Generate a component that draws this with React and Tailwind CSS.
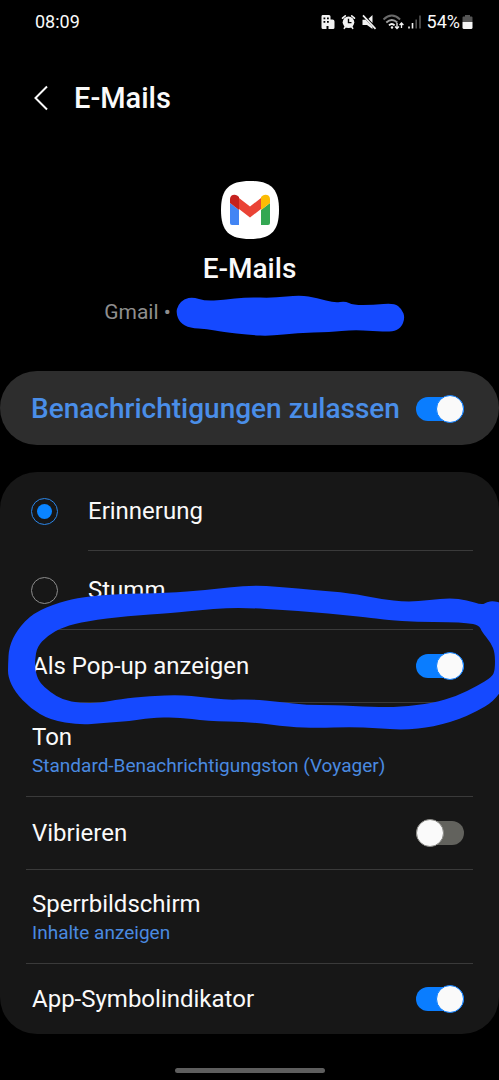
import { useState } from "react";

const loopOuter = [
  [8, 665], [9, 647], [17, 630], [33, 613], [60, 602], [83, 597], [117, 594], [167, 593], [207, 590], [250, 585],
  [283, 587], [313, 590], [350, 593], [380, 599], [407, 602], [430, 600], [450, 598], [467, 600], [482, 605],
  [487, 602], [493, 601], [503, 603], [512, 650], [503, 696], [467, 717], [433, 727], [403, 730], [377, 728],
  [350, 727], [317, 728], [290, 727], [250, 722], [207, 721], [177, 717], [150, 718], [130, 721], [103, 723],
  [80, 725], [50, 720], [30, 708], [15, 692], [8, 677],
];

const loopInner = [
  [35, 660], [37, 647], [47, 636], [63, 627], [87, 621], [127, 616], [173, 613], [200, 610], [227, 608], [250, 608],
  [283, 610], [313, 612], [343, 615], [373, 618], [387, 620], [417, 622], [450, 622], [467, 623], [479, 625],
  [482, 632], [491, 643], [495, 653], [495, 670], [492, 677], [477, 686], [457, 696], [433, 703], [400, 707],
  [373, 707], [333, 705], [307, 705], [280, 702], [250, 699], [227, 700], [203, 697], [180, 695], [150, 696],
  [120, 699], [100, 703], [80, 703], [63, 700], [50, 692], [39, 682], [35, 670],
];

const scribble = [
  [176, 313], [178, 305], [184, 299], [193, 297], [205, 301], [223, 300], [247, 297], [273, 298], [300, 295],
  [317, 298], [335, 303], [345, 301], [353, 305], [373, 305], [394, 303], [402, 309], [405, 318], [401, 328],
  [392, 332], [373, 331], [353, 330], [330, 332], [297, 333], [270, 336], [250, 335], [223, 332], [207, 329],
  [190, 328], [180, 323],
];

// closed curve through the midpoints of the given points
const smooth = (pts) => {
  const mid = (a, b) => `${(a[0] + b[0]) / 2} ${(a[1] + b[1]) / 2}`;
  const start = mid(pts[pts.length - 1], pts[0]);
  const curves = pts.map((p, i) => `Q${p[0]} ${p[1]} ${mid(p, pts[(i + 1) % pts.length])}`);
  return `M${start}${curves.join("")}Z`;
};

const StatusIcons = () => (
  <svg width="101" height="16" viewBox="320 14 101 16" fill="none" aria-hidden="true">
    {/* building */}
    <path
      fill="#f2f2f2"
      fillRule="evenodd"
      d="M321.5 15h6.500q1.500 0 1.500 1.500V19.500h2q2 0 2 2V27.500q0 1.500-1.500 1.500h-4.500v-3h-2v3h-3.500q-1.500 0-1.500-1.500V16.500q0-1.500 1-1.500ZM322.500 17.500v1.800h1.800v-1.800ZM326 17.500v1.800h1.800v-1.800ZM322.500 21v1.800h1.800V21ZM326 21v1.800h1.800V21Z"
    />
    {/* alarm */}
    <circle cx="347.500" cy="22.300" r="5.800" fill="#f2f2f2" />
    <path stroke="#f2f2f2" strokeWidth="1.600" strokeLinecap="round" d="M341.500 18.200l2.800-2.400M353.500 18.200l-2.800-2.400M343.300 28.300l1-1.200M351.700 28.300l-1-1.200" />
    <path stroke="#000" strokeWidth="1.400" d="M347.500 18.800v3.800h3" />
    {/* muted speaker */}
    <path fill="#f2f2f2" d="M361.500 19.800l3.200 0l6.800 7.200v2l-5.500-4h-4.500ZM367.500 18.800l4-3.800v8Z" />
    <path stroke="#f2f2f2" strokeWidth="1.700" d="M362 15.300l12.500 13.500" />
    {/* wifi */}
    <g strokeWidth="1.900">
      <path stroke="#6a6a6a" d="M382.500 19.500q8.300-7.800 16.600 0" />
      <path stroke="#a0a0a0" d="M385.300 22.500q5.500-5 11 0" />
      <path stroke="#f2f2f2" d="M388 25.300q2.800-2.800 5.600 0" />
    </g>
    <circle cx="391" cy="27.500" r="1.200" fill="#f2f2f2" />
    <path stroke="#f2f2f2" strokeWidth="1.300" d="M396 23v5.500M394 26.500l2 2 2-2M400.500 28v-5M398.600 25l1.900-2 1.900 2" />
    {/* signal */}
    <path stroke="#f2f2f2" strokeWidth="1.600" d="M408 26.500v2M411.500 23v5.500" />
    <path stroke="#555" strokeWidth="1.600" d="M415.200 19.500v9M419 15.500v13" />
  </svg>
);

const BatteryIcon = () => (
  <svg width="11" height="16" viewBox="0 0 11 16" aria-hidden="true">
    <path fill="#555" d="M3 1h5v1.500h1.500q1 0 1 1V8H.5V3.500q0-1 1-1H3Z" />
    <path fill="#f5f5f5" d="M.5 8h10v5.500q0 1.500-1.500 1.500H2q-1.500 0-1.500-1.500Z" />
  </svg>
);

const GmailIcon = () => (
  <svg width="60" height="60" viewBox="0 0 60 60" aria-label="Gmail" role="img">
    <path fill="#fff" d="M30 1C51 1 59 9 59 30S51 59 30 59 1 51 1 30 9 1 30 1Z" />
    <path fill="#4285f4" d="M10 23l9 7v15h-7q-2 0-2-2Z" />
    <path fill="#34a853" d="M50 23l-9 7v15h7q2 0 2-2Z" />
    <path fill="#ea4335" d="M19 18l11 8.500 11-8.500v11l-11 8.500-11-8.500Z" />
    <path fill="#c5221f" d="M10 19c0-4 4.500-5.500 7.500-3.200L19 17v13l-9-7Z" />
    <path fill="#fbbc04" d="M50 19c0-4-4.500-5.500-7.500-3.200L41 17v13l9-7Z" />
  </svg>
);

const Toggle = ({ id, defaultChecked }) => (
  <input
    id={id}
    type="checkbox"
    role="switch"
    defaultChecked={defaultChecked}
    className="flex h-6 w-12 shrink-0 appearance-none items-center rounded-full bg-[#62625d] before:size-7 before:shrink-0 before:rounded-full before:border before:border-[#8a8a86] before:bg-[#fafafa] checked:bg-[#0a7dff] checked:before:ml-5 checked:before:border-[#0a7dff]"
  />
);

const SwitchRow = ({ id, label, checked, last }) => (
  <div
    className={`mx-[26px] flex items-center justify-between pr-[9px] pl-[6px] ${last ? "py-[19px]" : "border-b border-[#3a3a3a] py-5"}`}
  >
    <label htmlFor={id} className="text-2xl">
      {label}
    </label>
    <Toggle id={id} defaultChecked={checked} />
  </div>
);

const LinkRow = ({ title, value }) => (
  <button type="button" className="mx-[26px] border-b border-[#3a3a3a] py-[18px] pl-[6px] text-left">
    <span className="block text-2xl">{title}</span>
    <span className="block text-[19px] leading-[25px] text-[#4a8ae0]">{value}</span>
  </button>
);

const Radio = ({ id, checked, onChange }) => (
  <input
    id={id}
    type="radio"
    name="mode"
    checked={checked}
    onChange={onChange}
    className="flex size-[27px] shrink-0 appearance-none items-center justify-center rounded-full border border-[#8c8c8c] checked:border-[#2b86e8] checked:before:size-[15px] checked:before:rounded-full checked:before:bg-[#0a84ff]"
  />
);

const App = () => {
  const [mode, setMode] = useState("alert");

  return (
    <div className="flex min-h-screen flex-col overflow-hidden bg-black font-['Roboto',sans-serif] text-[#fafafa]">
      <div className="flex h-11 items-center justify-between pr-[26px] pl-[35px] text-lg">
        <span>08:09</span>
        <div className="flex items-center">
          <StatusIcons />
          <span className="mr-0.5 ml-[5px]">54%</span>
          <BatteryIcon />
        </div>
      </div>

      <header className="flex items-center gap-6 pt-[34px] pl-8">
        <button type="button" aria-label="Zurück">
          <svg width="18" height="26" viewBox="0 0 18 26" fill="none" stroke="#fafafa" strokeWidth="2">
            <path d="M15 1.500L3.500 13L15 24.500" />
          </svg>
        </button>
        <h1 className="text-[29px] leading-10 font-medium">E-Mails</h1>
      </header>

      <section className="flex flex-col items-center pt-[62px]">
        <GmailIcon />
        <h2 className="mt-[9px] text-[28px] leading-10 font-medium">E-Mails</h2>
        <div className="mt-[6px] flex items-start pl-[10px] text-[#8e8e8e]">
          <span className="text-[21px] leading-[34px]">Gmail •</span>
          <svg width="230" height="42" viewBox="175 295 230 42" className="ml-1" aria-hidden="true">
            <path d={smooth(scribble)} fill="#1549ff" />
          </svg>
        </div>
      </section>

      <section className="mt-[34px] flex items-center justify-between rounded-[37px] bg-[#2d2d2d] pt-[18px] pr-[35px] pb-4 pl-[31px]">
        <label htmlFor="allow" className="text-[28px] leading-10 font-medium text-[#4a8ee8]">
          Benachrichtigungen zulassen
        </label>
        <Toggle id="allow" defaultChecked />
      </section>

      <section className="relative mt-[27px] flex flex-col rounded-[37px] bg-[#171717]">
        <div className="mx-[26px] flex items-center gap-[30px] pl-[5px]">
          <Radio id="alert" checked={mode === "alert"} onChange={() => setMode("alert")} />
          <label htmlFor="alert" className="flex-1 border-b border-[#3a3a3a] py-[23px] text-2xl">
            Erinnerung
          </label>
        </div>
        <div className="mx-[26px] flex items-center gap-[30px] border-b border-[#3a3a3a] pl-[5px]">
          <Radio id="silent" checked={mode === "silent"} onChange={() => setMode("silent")} />
          <label htmlFor="silent" className="flex-1 py-[23px] text-2xl">
            Stumm
          </label>
        </div>
        <SwitchRow id="popup" label="Als Pop-up anzeigen" checked />
        <LinkRow title="Ton" value="Standard-Benachrichtigungston (Voyager)" />
        <SwitchRow id="vibrate" label="Vibrieren" />
        <LinkRow title="Sperrbildschirm" value="Inhalte anzeigen" />
        <SwitchRow id="badge" label="App-Symbolindikator" checked last />

        {/* hand-drawn marker loop around the pop-up row */}
        <svg
          viewBox="0 580 499 155"
          preserveAspectRatio="none"
          className="pointer-events-none absolute top-[108px] left-0 h-[155px] w-full"
          aria-hidden="true"
        >
          <path d={smooth(loopOuter) + smooth(loopInner)} fill="#1549ff" fillRule="evenodd" />
        </svg>
      </section>

      <div className="mt-auto flex justify-center pb-[7px]">
        <div className="h-[5px] w-[150px] rounded-full bg-[#5e5e5e]" />
      </div>
    </div>
  );
};

export default App;
